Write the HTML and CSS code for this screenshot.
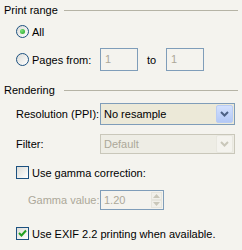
FILE: index.html
```html
<!DOCTYPE html>
<html>
<head>
    <title>Print Options</title>
    <link rel="stylesheet" href="styles.css">
</head>
<body>
    <div class="panel">
        <div class="group-title"><span>Print range</span><div class="rule"></div></div>

        <div class="row row-all">
            <span class="radio checked"></span>
            <span class="opt-label">All</span>
        </div>
        <div class="row row-pages">
            <span class="radio"></span>
            <span class="opt-label pages-label">Pages from:</span>
            <div class="edit disabled">1</div>
            <span class="to">to</span>
            <div class="edit disabled">1</div>
        </div>

        <div class="group-title rendering"><span>Rendering</span><div class="rule"></div></div>

        <div class="row row-res">
            <span class="field-label">Resolution (PPI):</span>
            <div class="combo">
                <span class="combo-text">No resample</span>
                <span class="combo-btn">
                    <svg width="9" height="6" viewBox="0 0 9 6"><polyline points="1,1 4.5,4.5 8,1" fill="none" stroke="#4D6185" stroke-width="2"/></svg>
                </span>
            </div>
        </div>
        <div class="row row-filter">
            <span class="field-label">Filter:</span>
            <div class="combo disabled">
                <span class="combo-text">Default</span>
                <span class="combo-btn">
                    <svg width="9" height="6" viewBox="0 0 9 6"><polyline points="1,1 4.5,4.5 8,1" fill="none" stroke="#C9C7BA" stroke-width="2"/></svg>
                </span>
            </div>
        </div>

        <div class="row row-gamma">
            <span class="check"></span>
            <span class="opt-label">Use gamma correction:</span>
        </div>
        <div class="row row-gval">
            <span class="field-label sub disabled-text">Gamma value:</span>
            <div class="spin">
                <span class="spin-text">1.20</span>
                <span class="spin-btns">
                    <span class="spin-half"><svg width="7" height="4" viewBox="0 0 7 4"><polygon points="0,4 3.5,0 7,4" fill="#C9C7BA"/></svg></span>
                    <span class="spin-half"><svg width="7" height="4" viewBox="0 0 7 4"><polygon points="0,0 3.5,4 7,0" fill="#C9C7BA"/></svg></span>
                </span>
            </div>
        </div>

        <div class="row row-exif">
            <span class="check checked">
                <svg width="11" height="11" viewBox="0 0 11 11"><polyline points="2,5 4.5,7.5 9,2.5" fill="none" stroke="#21A121" stroke-width="2"/></svg>
            </span>
            <span class="opt-label">Use EXIF 2.2 printing when available.</span>
        </div>
    </div>
</body>
</html>
```

FILE: styles.css
```css
body {
    margin: 0;
    background: #F4F3EE;
    font-family: "Liberation Sans", Arial, sans-serif;
    font-size: 11px;
    color: #000;
}
.panel {
    width: 242px;
    height: 250px;
    padding-top: 3px;
    box-sizing: border-box;
}
.group-title {
    display: flex;
    align-items: center;
    height: 13px;
    padding-left: 4px;
}
.group-title span {
    width: 60px;
}
.group-title .rule {
    width: 174px;
    height: 0;
    border-top: 1px solid #B5B3A5;
    margin-top: 1px;
}
.group-title.rendering {
    margin-top: 12px;
}
.row {
    display: flex;
    align-items: center;
    padding-left: 16px;
}
.row-all {
    margin-top: 4px;
    height: 23px;
}
.row-pages {
    margin-top: 5px;
    height: 23px;
}
.row-res {
    margin-top: 7px;
    height: 22px;
}
.row-filter {
    margin-top: 9px;
    height: 20px;
}
.row-gamma {
    margin-top: 12px;
    height: 13px;
}
.row-gval {
    margin-top: 11px;
    height: 20px;
}
.row-exif {
    margin-top: 17px;
    height: 13px;
}
.opt-label {
    margin-left: 3px;
}
.pages-label {
    width: 68px;
}
.field-label {
    width: 84px;
}
.field-label.sub {
    width: 72px;
    padding-left: 12px;
}
.disabled-text {
    color: #ACA899;
}

/* radio buttons */
.radio {
    width: 11px;
    height: 11px;
    border: 1px solid #1C5180;
    border-radius: 50%;
    background: linear-gradient(135deg, #DCDCD7, #FFFFFF);
    display: flex;
    align-items: center;
    justify-content: center;
}
.radio.checked::after {
    content: "";
    width: 5px;
    height: 5px;
    border-radius: 50%;
    background: radial-gradient(circle at 35% 35%, #7BE37B, #21A121);
}

/* checkboxes */
.check {
    width: 11px;
    height: 11px;
    border: 1px solid #1C5180;
    background: linear-gradient(135deg, #DCDCD7, #FFFFFF);
    display: flex;
}

/* edit boxes */
.edit {
    width: 32px;
    height: 21px;
    border: 1px solid #7F9DB9;
    padding-left: 4px;
    line-height: 21px;
    color: #ACA899;
}
.to {
    margin-left: 9px;
    width: 19px;
}

/* combo boxes */
.combo {
    width: 133px;
    height: 20px;
    border: 1px solid #7F9DB9;
    background: #ECE9D8;
    display: flex;
    align-items: center;
    justify-content: space-between;
}
.combo-text {
    padding-left: 3px;
}
.combo-btn {
    width: 15px;
    height: 16px;
    margin-right: 1px;
    border: 1px solid #B9CCF4;
    border-radius: 2px;
    background: linear-gradient(#D3E0FD, #B3C8F6);
    display: flex;
    align-items: center;
    justify-content: center;
}
.combo.disabled {
    height: 18px;
    border-color: #C9C7BA;
    background: #EEEDE5;
    color: #ACA899;
}
.combo.disabled .combo-btn {
    border-color: #E8E7DF;
    background: #F4F3EE;
}

/* spinner */
.spin {
    width: 62px;
    height: 18px;
    border: 1px solid #7F9DB9;
    display: flex;
    justify-content: space-between;
}
.spin-text {
    padding-left: 3px;
    line-height: 18px;
    color: #ACA899;
}
.spin-btns {
    width: 11px;
    margin: 1px 1px 1px 0;
    display: flex;
    flex-direction: column;
}
.spin-half {
    flex: 1;
    background: #F1F0EA;
    border: 1px solid #E6E5DD;
    display: flex;
    align-items: center;
    justify-content: center;
}
```
